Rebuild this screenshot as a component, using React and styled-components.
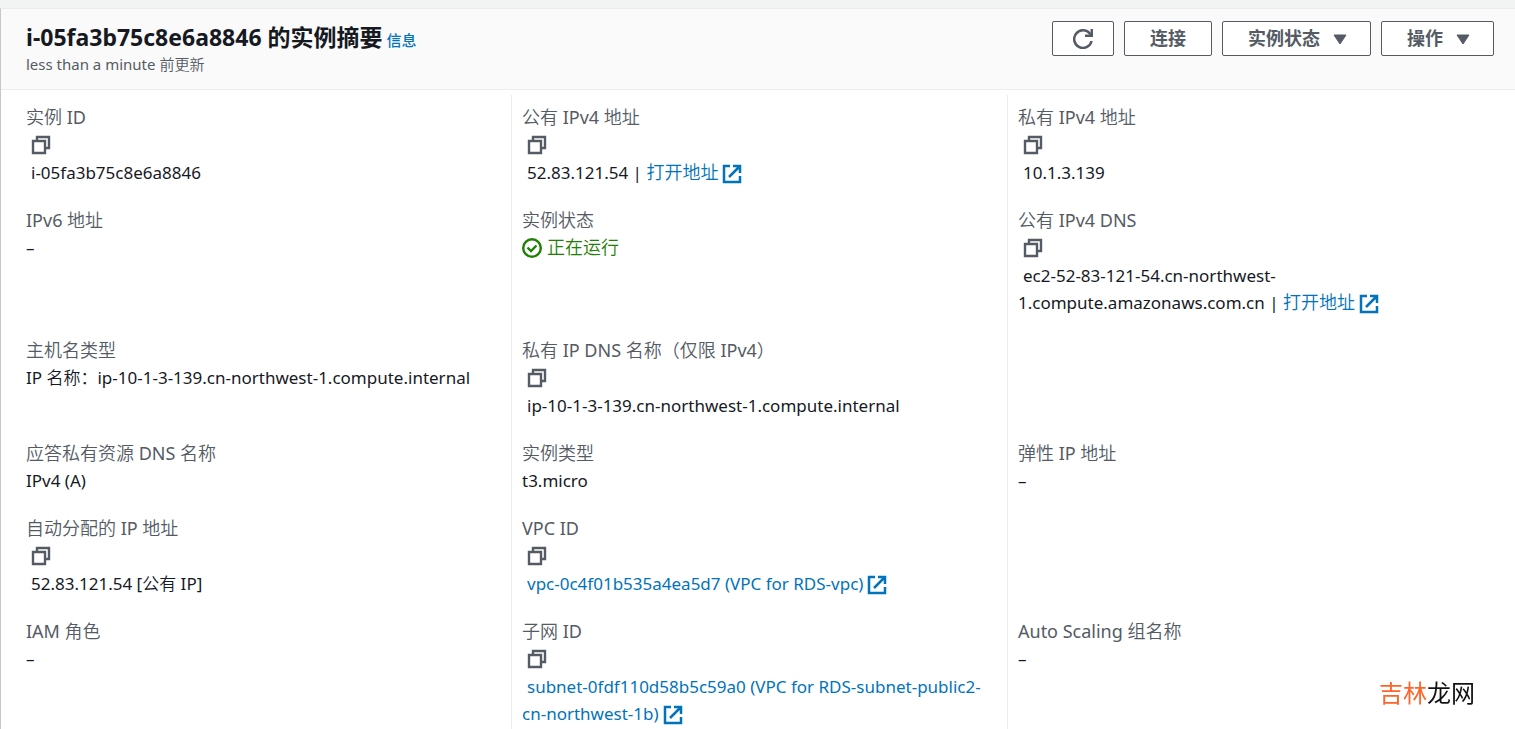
import React from 'react';
import styled, { createGlobalStyle } from 'styled-components';

const GlobalStyle = createGlobalStyle`
  * {
    box-sizing: border-box;
  }
  body {
    margin: 0;
    overflow: hidden;
    background: #ffffff;
    color: #16191f;
    font-family: 'Noto Sans', 'Noto Sans CJK SC DemiLight', 'Noto Sans CJK SC', sans-serif;
    font-size: 17px;
    line-height: 27px;
  }
`;

const Page = styled.div`
  min-height: 100vh;
  padding-top: 8px;
  background: #f2f3f3;
`;

const Panel = styled.section`
  min-height: calc(100vh - 8px);
  background: #ffffff;
  border-top: 1px solid #eaeded;
  border-left: 1px solid #c3c8ca;
`;

const Header = styled.header`
  display: flex;
  justify-content: space-between;
  align-items: flex-start;
  padding: 12px 21px 14px 25px;
  background: #fafafa;
  border-bottom: 1px solid #eaeded;
`;

const TitleRow = styled.div`
  display: flex;
  align-items: baseline;
  gap: 4px;
  font-family: 'Noto Sans', 'Noto Sans CJK SC', sans-serif;
`;

const Title = styled.h2`
  margin: 0;
  font-size: 23px;
  font-weight: 700;
  line-height: 32px;
`;

const InfoLink = styled.a`
  color: #0073bb;
  font-size: 15px;
  font-weight: 500;
  line-height: 20px;
  text-decoration: none;
`;

const Updated = styled.p`
  margin: 0;
  color: #545b64;
  font-size: 15px;
  line-height: 22px;
`;

const Actions = styled.div`
  display: flex;
  gap: 10px;
`;

const Button = styled.button`
  display: flex;
  align-items: center;
  gap: 12px;
  height: 35px;
  padding: ${(props) => (props.$menu ? '0 22px 0 25px' : props.$icon ? '0 20px' : '0 25px')};
  border: 1px solid #545b64;
  border-radius: 2px;
  background: #ffffff;
  color: #545b64;
  font-family: 'Noto Sans', 'Noto Sans CJK SC', sans-serif;
  font-size: 18px;
  font-weight: 700;
  line-height: 27px;
  cursor: pointer;
`;

const Fields = styled.dl`
  display: grid;
  grid-template-columns: repeat(3, minmax(0, 1fr));
  margin: 0;
  padding: 5px 12px 0 14px;
`;

const Field = styled.div`
  padding: 8px 10px 12px;
  border-left: 1px solid transparent;

  &:not(:nth-child(3n + 1)) {
    border-left-color: #eaeded;
  }
`;

const Label = styled.dt`
  color: #545b64;
  font-size: 18px;
  line-height: 28px;
`;

const Value = styled.dd`
  margin: 0;
`;

const CopiedText = styled.div`
  text-indent: 5px;
`;

const CopyButton = styled.button`
  display: flex;
  align-items: center;
  height: 28px;
  padding: 0 5px;
  border: none;
  background: none;
  color: #545b64;
  cursor: pointer;
`;

const Link = styled.a`
  color: #0073bb;
  text-decoration: none;

  svg {
    margin-left: 4px;
    vertical-align: -5px;
  }
`;

const Chinese = styled.span`
  font-size: 18px;
`;

const Status = styled.span`
  display: flex;
  align-items: center;
  gap: 5px;
  color: #1d8102;
`;

const Watermark = styled.div`
  position: fixed;
  right: 40px;
  bottom: 20px;
  color: #111111;
  font-family: 'Noto Sans CJK SC', sans-serif;
  font-size: 24px;
  line-height: 34px;

  span {
    color: #ff6429;
  }
`;

const CopyIcon = () => (
  <svg width="20" height="20" viewBox="0 0 20 20" fill="none" stroke="currentColor" strokeWidth="2.4">
    <path d="M2 6h12v12H2z" />
    <path d="M6 6V2h12v11h-4" />
  </svg>
);

const ExternalIcon = () => (
  <svg width="20" height="20" viewBox="0 0 20 20" fill="none" stroke="currentColor" strokeWidth="2.5">
    <path d="M8 2H2v16h16v-6" />
    <path d="M11 2h7v7M18 2L7 13" />
  </svg>
);

const CheckIcon = () => (
  <svg width="20" height="20" viewBox="0 0 20 20" fill="none" stroke="currentColor" strokeWidth="2.4">
    <circle cx="10" cy="10" r="8.800" />
    <path d="M5.500 9.500l3.500 3.500 5.500-5.500" />
  </svg>
);

const RefreshIcon = () => (
  <svg width="20" height="20" viewBox="0 0 20 20" fill="none" stroke="currentColor" strokeWidth="2.5">
    <path d="M18.600 12A8.800 8.800 0 1 1 16.500 4.200L19 6.500" />
    <path d="M18.800 0v6.700H12" />
  </svg>
);

const CaretIcon = () => (
  <svg width="16" height="16" viewBox="0 0 16 16" fill="currentColor" stroke="currentColor" strokeLinejoin="round">
    <path d="M2 4h12L8 13z" />
  </svg>
);

const Copyable = ({ name, children }) => (
  <>
    <CopyButton type="button" aria-label={`复制 ${name}`}>
      <CopyIcon />
    </CopyButton>
    <CopiedText>{children}</CopiedText>
  </>
);

const OpenAddress = () => (
  <Link href="#open">
    <Chinese>打开地址</Chinese>
    <ExternalIcon />
  </Link>
);

const fields = [
  { label: '实例 ID', copy: true, value: 'i-05fa3b75c8e6a8846' },
  { label: '公有 IPv4 地址', copy: true, value: <>52.83.121.54 | <OpenAddress /></> },
  { label: '私有 IPv4 地址', copy: true, value: '10.1.3.139' },
  { label: 'IPv6 地址', value: '–' },
  { label: '实例状态', value: <Status><CheckIcon /><Chinese>正在运行</Chinese></Status> },
  {
    label: '公有 IPv4 DNS',
    copy: true,
    value: <>ec2-52-83-121-54.cn-northwest-1.compute.amazonaws.com.cn | <OpenAddress /></>,
  },
  { label: '主机名类型', value: 'IP 名称：ip-10-1-3-139.cn-northwest-1.compute.internal' },
  { label: '私有 IP DNS 名称（仅限 IPv4）', copy: true, value: 'ip-10-1-3-139.cn-northwest-1.compute.internal' },
  null,
  { label: '应答私有资源 DNS 名称', value: 'IPv4 (A)' },
  { label: '实例类型', value: 't3.micro' },
  { label: '弹性 IP 地址', value: '–' },
  { label: '自动分配的 IP 地址', copy: true, value: '52.83.121.54 [公有 IP]' },
  {
    label: 'VPC ID',
    copy: true,
    value: <Link href="#vpc">vpc-0c4f01b535a4ea5d7 (VPC for RDS-vpc)<ExternalIcon /></Link>,
  },
  null,
  { label: 'IAM 角色', value: '–' },
  {
    label: '子网 ID',
    copy: true,
    value: <Link href="#subnet">subnet-0fdf110d58b5c59a0 (VPC for RDS-subnet-public2-cn-northwest-1b)<ExternalIcon /></Link>,
  },
  { label: 'Auto Scaling 组名称', value: '–' },
];

const App = () => {
  return (
    <Page lang="zh-CN">
      <GlobalStyle />
      <Panel>
        <Header>
          <div>
            <TitleRow>
              <Title>i-05fa3b75c8e6a8846 的实例摘要</Title>
              <InfoLink href="#info">信息</InfoLink>
            </TitleRow>
            <Updated>less than a minute 前更新</Updated>
          </div>
          <Actions>
            <Button type="button" $icon aria-label="刷新"><RefreshIcon /></Button>
            <Button type="button">连接</Button>
            <Button type="button" $menu>实例状态<CaretIcon /></Button>
            <Button type="button" $menu>操作<CaretIcon /></Button>
          </Actions>
        </Header>
        <Fields>
          {fields.map((field, i) => (
            <Field key={i}>
              {field && (
                <>
                  <Label>{field.label}</Label>
                  <Value>
                    {field.copy ? <Copyable name={field.label}>{field.value}</Copyable> : field.value}
                  </Value>
                </>
              )}
            </Field>
          ))}
        </Fields>
      </Panel>
      <Watermark><span>吉林</span>龙网</Watermark>
    </Page>
  );
};

export default App;
